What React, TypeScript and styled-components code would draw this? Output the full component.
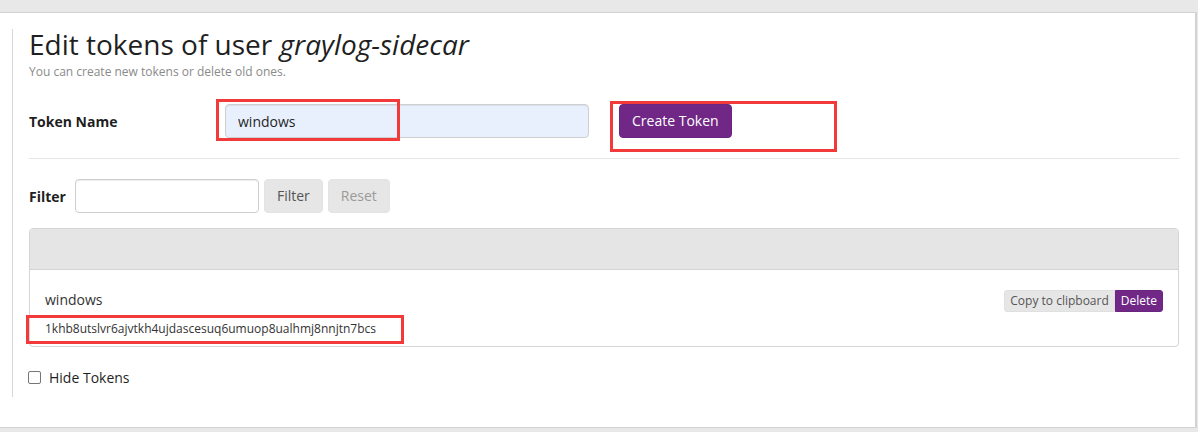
import React from "react";
import styled, { createGlobalStyle } from "styled-components";

const GlobalStyle = createGlobalStyle`
  html, body { margin: 0; padding: 0; }
  body {
    background: #e8e8e8;
    font-family: "Open Sans", "Noto Sans", sans-serif;
    color: #1f1f1f;
    font-size: 14px;
  }
  * { box-sizing: border-box; }
`;

const Page = styled.div`
  position: relative;
  width: 1198px;
  height: 432px;
  padding: 12px 1px 0 0;
  background: #e8e8e8;
  overflow: hidden;
`;

const Content = styled.div`
  height: 416px;
  background: #fff;
  border-top: 1px solid #d2d2d2;
  border-bottom: 1px solid #d2d2d2;
  border-right: 2px solid #d2d2d2;
  padding: 16px 16px 0 12px;
`;

const Column = styled.div`
  height: 368px;
  border-left: 1px solid #d6d6d6;
  padding-left: 16px;
  display: flex;
  flex-direction: column;
`;

const Title = styled.h1`
  margin: 0;
  font-size: 28px;
  line-height: 30px;
  font-weight: 400;
  color: #1f1f1f;
  em { font-style: italic; }
`;

const Subtitle = styled.p`
  margin: 4px 0 0;
  font-size: 12px;
  line-height: 17px;
  color: #8a8a8a;
`;

const FormRow = styled.div`
  display: flex;
  align-items: center;
  margin-top: 24px;
  height: 34px;
`;

const Label = styled.label<{ $width?: number }>`
  font-weight: 700;
  font-size: 14px;
  color: #1f1f1f;
  ${(p) => (p.$width ? `width: ${p.$width}px;` : "margin-right: 9px;")}
  flex-shrink: 0;
`;

const TextInput = styled.input<{ $width: number; $filled?: boolean }>`
  width: ${(p) => p.$width}px;
  height: 34px;
  padding: 6px 12px;
  font-family: inherit;
  font-size: 14px;
  color: #1f1f1f;
  background: ${(p) => (p.$filled ? "#e8f0fe" : "#fff")};
  border: 1px solid #cfcfcf;
  border-radius: 4px;
  box-shadow: inset 0 1px 1px rgba(0, 0, 0, 0.075);
  outline: none;
`;

const Button = styled.button<{ $variant: "primary" | "default"; $disabled?: boolean; $gap?: number }>`
  height: 34px;
  padding: 6px 12px;
  margin-left: ${(p) => p.$gap ?? 0}px;
  font-family: inherit;
  font-size: 14px;
  line-height: 20px;
  border-radius: 4px;
  border: 1px solid ${(p) => (p.$variant === "primary" ? "#6b2480" : "#e3e3e3")};
  background: ${(p) => (p.$variant === "primary" ? "#702785" : "#e6e6e6")};
  color: ${(p) => (p.$variant === "primary" ? "#fff" : p.$disabled ? "#9a9a9a" : "#555")};
  cursor: pointer;
`;

const Divider = styled.hr`
  margin: 20px 0 0;
  border: 0;
  border-top: 1px solid #e6e6e6;
  height: 0;
`;

const FilterRow = styled.div`
  display: flex;
  align-items: center;
  margin-top: 20px;
  height: 34px;
`;

const Card = styled.div`
  margin-top: 15px;
  border: 1px solid #d4d4d4;
  border-radius: 4px;
  overflow: hidden;
`;

const CardHeader = styled.div`
  height: 41px;
  background: #e5e5e5;
  border-bottom: 1px solid #d4d4d4;
`;

const CardBody = styled.div`
  padding: 20px 15px 9px 15px;
`;

const TokenTop = styled.div`
  display: flex;
  justify-content: space-between;
  align-items: flex-start;
`;

const TokenName = styled.span`
  font-size: 14px;
  line-height: 20px;
  color: #333;
`;

const BtnGroup = styled.div`
  display: flex;
`;

const SmallButton = styled.button<{ $variant: "primary" | "default"; $pos: "first" | "last" }>`
  height: 22px;
  padding: 1px 5px;
  font-family: inherit;
  font-size: 12px;
  line-height: 18px;
  border: 1px solid ${(p) => (p.$variant === "primary" ? "#6b2480" : "#e0e0e0")};
  background: ${(p) => (p.$variant === "primary" ? "#702785" : "#e6e6e6")};
  color: ${(p) => (p.$variant === "primary" ? "#fff" : "#555")};
  border-radius: ${(p) => (p.$pos === "first" ? "3px 0 0 3px" : "0 3px 3px 0")};
  cursor: pointer;
`;

const TokenValue = styled.div`
  margin-top: 8px;
  font-size: 12px;
  line-height: 17px;
  color: #333;
`;

const CheckRow = styled.label`
  display: flex;
  align-items: center;
  margin-top: 20px;
  margin-left: -1px;
  height: 20px;
  font-size: 14px;
  color: #1f1f1f;
`;

const Checkbox = styled.input`
  appearance: none;
  width: 13px;
  height: 13px;
  margin: 0 8px 0 0;
  border: 1px solid #767676;
  border-radius: 2px;
  background: #fff;
`;

const Highlight = styled.div<{ $x: number; $y: number; $w: number; $h: number }>`
  position: absolute;
  left: ${(p) => p.$x}px;
  top: ${(p) => p.$y}px;
  width: ${(p) => p.$w}px;
  height: ${(p) => p.$h}px;
  border: 3px solid #f23a3a;
  pointer-events: none;
`;

export default function App() {
  return (
    <>
      <GlobalStyle />
      <Page>
        <Content>
          <Column>
            <Title>
              Edit tokens of user <em>graylog-sidecar</em>
            </Title>
            <Subtitle>You can create new tokens or delete old ones.</Subtitle>
            <FormRow>
              <Label $width={196}>Token Name</Label>
              <TextInput $width={364} $filled defaultValue="windows" />
              <Button $variant="primary" $gap={30}>Create Token</Button>
            </FormRow>
            <Divider />
            <FilterRow>
              <Label>Filter</Label>
              <TextInput $width={184} />
              <Button $variant="default" $gap={5}>Filter</Button>
              <Button $variant="default" $disabled $gap={5}>Reset</Button>
            </FilterRow>
            <Card>
              <CardHeader />
              <CardBody>
                <TokenTop>
                  <TokenName>windows</TokenName>
                  <BtnGroup>
                    <SmallButton $variant="default" $pos="first">Copy to clipboard</SmallButton>
                    <SmallButton $variant="primary" $pos="last">Delete</SmallButton>
                  </BtnGroup>
                </TokenTop>
                <TokenValue>1khb8utslvr6ajvtkh4ujdascesuq6umuop8ualhmj8nnjtn7bcs</TokenValue>
              </CardBody>
            </Card>
            <CheckRow>
              <Checkbox type="checkbox" />
              Hide Tokens
            </CheckRow>
          </Column>
        </Content>
        <Highlight $x={216} $y={99} $w={184} $h={42} />
        <Highlight $x={610} $y={101} $w={227} $h={51} />
        <Highlight $x={26} $y={315} $w={378} $h={29} />
      </Page>
    </>
  );
}
